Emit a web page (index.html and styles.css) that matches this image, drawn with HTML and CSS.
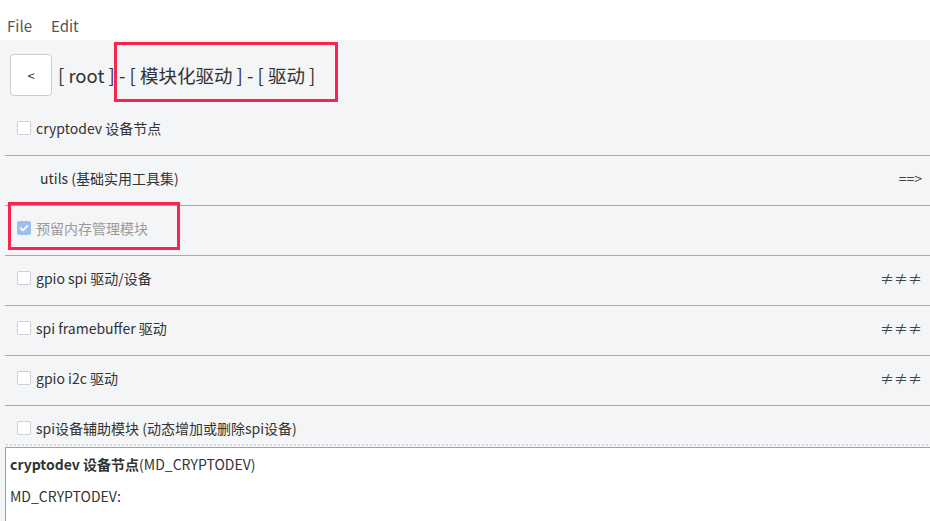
FILE: index.html
```html
<!DOCTYPE html>
<html lang="zh">
<head>
  <meta charset="utf-8">
  <title>menuconfig</title>
  <link rel="stylesheet" href="styles.css">
</head>
<body>
  <div class="menubar">
    <span class="menu-item">File</span>
    <span class="menu-item">Edit</span>
  </div>

  <div class="main">
    <div class="header">
      <button class="back_btn" type="button">&lt;</button>
      <span class="path">[ root ] - [ 模块化驱动 ] - [ 驱动 ]</span>
    </div>

    <div class="list">
      <div class="row">
        <span class="opt"><span class="check"></span>cryptodev 设备节点</span>
      </div>
      <div class="row">
        <span class="opt sub">utils (基础实用工具集)</span>
        <span class="mark">==&gt;</span>
      </div>
      <div class="row">
        <span class="opt off">
          <span class="check on">
            <svg width="14" height="14" viewBox="0 0 14 14"><path d="M3.6 7.1 L6 9.4 L10.4 4.8" fill="none" stroke="#fff" stroke-width="1.8" stroke-linecap="round" stroke-linejoin="round"/></svg>
          </span>预留内存管理模块
        </span>
      </div>
      <div class="row">
        <span class="opt"><span class="check"></span>gpio spi 驱动/设备</span>
        <span class="mark">≠≠≠</span>
      </div>
      <div class="row">
        <span class="opt"><span class="check"></span>spi framebuffer 驱动</span>
        <span class="mark">≠≠≠</span>
      </div>
      <div class="row">
        <span class="opt"><span class="check"></span>gpio i2c 驱动</span>
        <span class="mark">≠≠≠</span>
      </div>
      <div class="row last">
        <span class="opt"><span class="check"></span>spi设备辅助模块 (动态增加或删除spi设备)</span>
      </div>
    </div>

    <div class="splitter"></div>

    <div class="help">
      <p><b>cryptodev 设备节点</b>(MD_CRYPTODEV)</p>
      <p>MD_CRYPTODEV:</p>
    </div>
  </div>

  <div class="mark-box box-path"></div>
  <div class="mark-box box-reserve"></div>
</body>
</html>
```

FILE: styles.css
```css
html, body {
  margin: 0;
  height: 100%;
  overflow: hidden;
}

body {
  font-family: "Noto Sans CJK SC", "Noto Sans", sans-serif;
  color: #333;
  background-color: #fff;
}

.menubar {
  height: 40px;
  box-sizing: border-box;
  padding: 16px 0 0 7px;
  display: flex;
  gap: 19px;
  font-size: 15px;
  line-height: 20px;
  color: #555;
}

.main {
  background-color: #f4f5f7;
  height: 481px;
  display: flex;
  flex-direction: column;
}

.header {
  display: flex;
  align-items: flex-start;
  gap: 6px;
  padding: 14px 10px 0 10px;
  height: 66px;
  flex-shrink: 0;
  box-sizing: border-box;
}

.back_btn {
  width: 42px;
  height: 42px;
  border: 1px solid #ccc;
  border-radius: 4px;
  background-color: #fff;
  color: #333;
  font-family: inherit;
  font-size: 13px;
  padding: 0;
}

.path {
  font-size: 18.5px;
  line-height: 42px;
}

.list {
  margin-left: 5px;
}

.row {
  height: 50px;
  box-sizing: border-box;
  border-bottom: 1px solid #a9a9a9;
  display: flex;
  align-items: center;
  justify-content: space-between;
  padding: 0 8px 5px 12px;
  font-size: 14px;
}

.row.last {
  border-bottom: none;
  height: 37px;
  padding-top: 7px;
  padding-bottom: 0;
}

.opt {
  display: flex;
  align-items: center;
}

.check {
  width: 14px;
  height: 14px;
  box-sizing: border-box;
  border: 1px solid #ccd1da;
  border-radius: 2px;
  background-color: #fff;
  margin-right: 5px;
  display: flex;
}

.check.on {
  border-color: #9cbfeb;
  background-color: #9cbfeb;
}

.check svg {
  margin: -1px;
}

.opt.sub {
  padding-left: 23px;
}

.opt.off {
  color: #9a9a9a;
}

.mark {
  color: #444;
  font-size: 14px;
}

.splitter {
  height: 4px;
  margin-left: 5px;
  flex-shrink: 0;
  background-image: radial-gradient(circle, #dcdde0 1px, transparent 1.2px);
  background-size: 4px 4px;
}

.help {
  flex: 1;
  margin-left: 5px;
  background-color: #fff;
  border-top: 1px solid #a0a0a0;
  border-left: 1px solid #a0a0a0;
  padding: 6px 4px;
  font-size: 14px;
}

.help p {
  margin: 0 0 12px 0;
  line-height: 20px;
}

.mark-box {
  position: absolute;
  border: 3px solid #f7264f;
  box-sizing: border-box;
}

.box-path {
  left: 114px;
  top: 42px;
  width: 224px;
  height: 60px;
}

.box-reserve {
  left: 8px;
  top: 202px;
  width: 172px;
  height: 48px;
}
```
